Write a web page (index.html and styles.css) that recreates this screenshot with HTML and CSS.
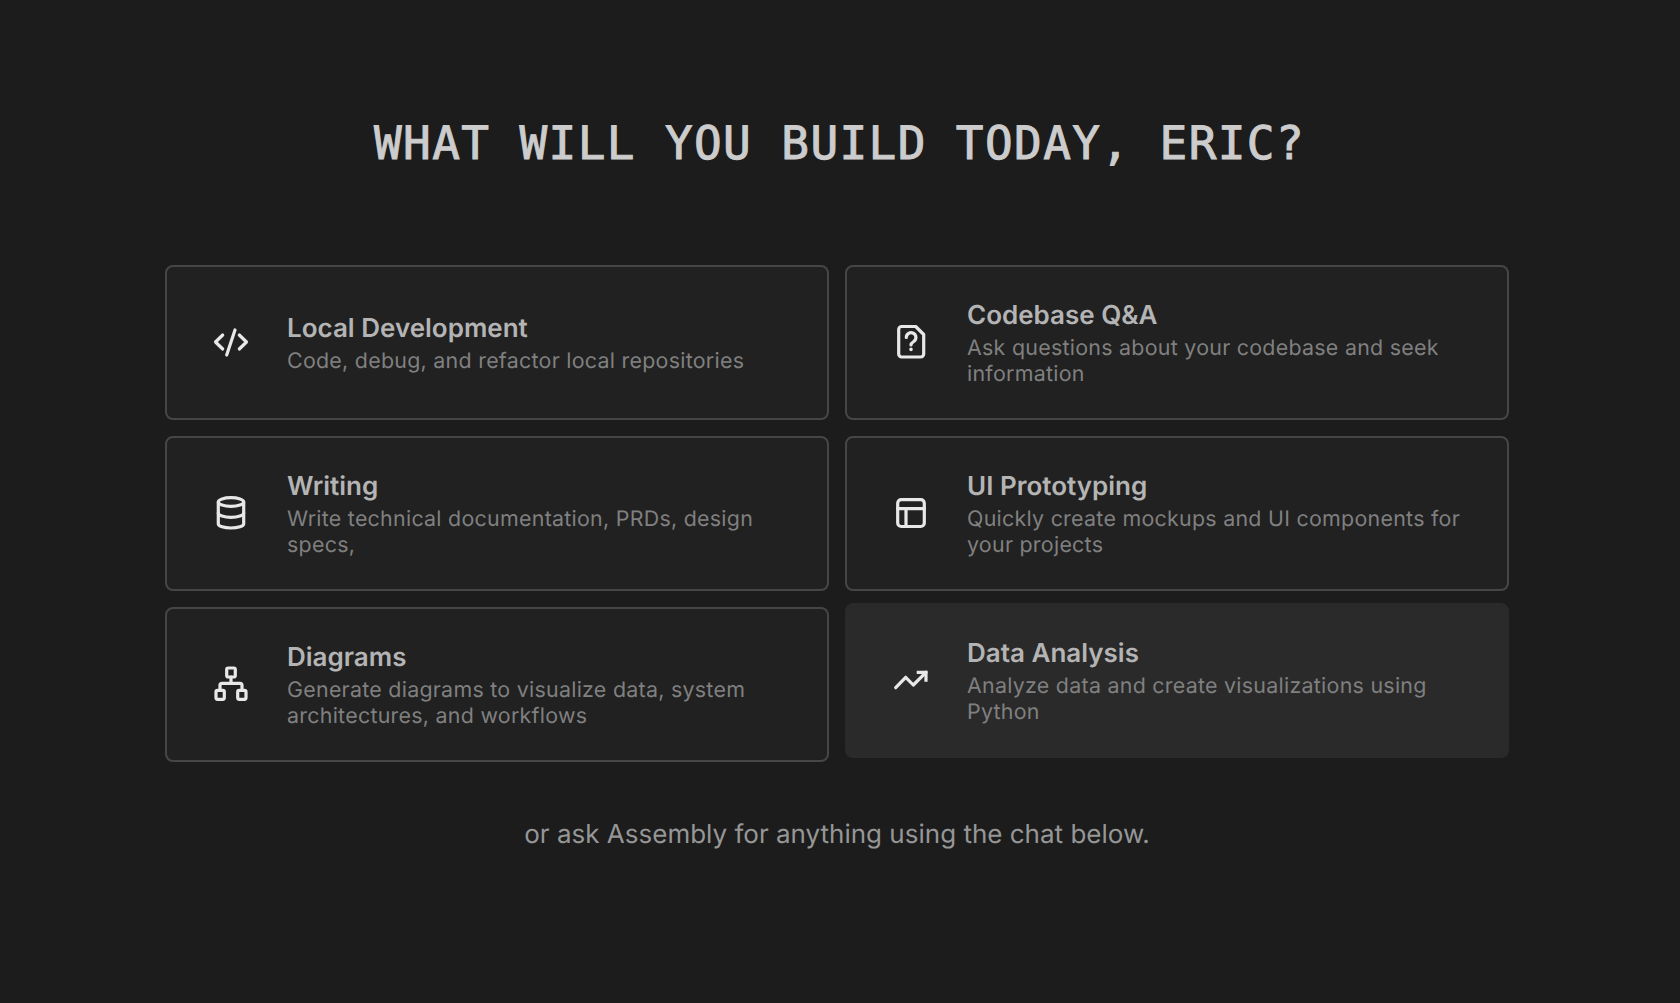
FILE: index.html
```html
<!DOCTYPE html>
<html lang="en">
<head>
    <meta charset="UTF-8">
    <meta name="viewport" content="width=device-width, initial-scale=1.0">
    <title>Assembly</title>
    <link rel="stylesheet" href="styles.css">
</head>
<body>
    <main class="welcome">
        <h1 class="welcome-title">What will you build today, Eric?</h1>

        <div class="card-grid">
            <div class="card">
                <svg class="card-icon" viewBox="0 0 40 40"><path d="M11.7 13 4.5 20l7.2 7M28.3 13l7.2 7-7.2 7M24 8l-8.3 25"/></svg>
                <div class="card-text">
                    <div class="card-title">Local Development</div>
                    <div class="card-desc">Code, debug, and refactor local repositories</div>
                </div>
            </div>
            <div class="card">
                <svg class="card-icon" viewBox="0 0 40 40"><path d="M10.7 4.5h14l8 8V32a3 3 0 0 1-3 3H10.7a3 3 0 0 1-3-3V7.500a3 3 0 0 1 3-3z"/><path d="M15.300 15.500a4.800 4.800 0 1 1 7.400 4c-1.700 1.100-2.700 1.800-2.700 3.500"/><path class="icon-dot" d="M20 27.300v.2"/></svg>
                <div class="card-text">
                    <div class="card-title">Codebase Q&amp;A</div>
                    <div class="card-desc">Ask questions about your codebase and seek information</div>
                </div>
            </div>
            <div class="card">
                <svg class="card-icon" viewBox="0 0 40 40"><ellipse cx="20" cy="9" rx="12.700" ry="4.300"/><path d="M7.300 9v22c0 2.200 5.700 4 12.700 4s12.700-1.800 12.700-4V9"/><path d="M7.300 20c0 2.400 5.700 4.300 12.700 4.300S32.700 22.400 32.700 20"/></svg>
                <div class="card-text">
                    <div class="card-title">Writing</div>
                    <div class="card-desc">Write technical documentation, PRDs, design specs,</div>
                </div>
            </div>
            <div class="card">
                <svg class="card-icon" viewBox="0 0 40 40"><rect x="6.700" y="6.700" width="26.600" height="26.800" rx="3.500"/><path d="M6.700 15.700h26.600M15 15.700v17.800"/></svg>
                <div class="card-text">
                    <div class="card-title">UI Prototyping</div>
                    <div class="card-desc">Quickly create mockups and UI components for your projects</div>
                </div>
            </div>
            <div class="card">
                <svg class="card-icon" viewBox="0 0 40 40"><rect x="15.700" y="4" width="8.600" height="9" rx="1.500"/><rect x="5" y="26.300" width="8.300" height="9" rx="1.500"/><rect x="26.700" y="26.300" width="8.300" height="9" rx="1.500"/><path d="M20 13v6.300M9 26.300v-5a2 2 0 0 1 2-2h18a2 2 0 0 1 2 2v5"/></svg>
                <div class="card-text">
                    <div class="card-title">Diagrams</div>
                    <div class="card-desc">Generate diagrams to visualize data, system architectures, and workflows</div>
                </div>
            </div>
            <div class="card card-hover">
                <svg class="card-icon" viewBox="0 0 40 40"><path d="M4.700 27.700 14.700 17.300l7.600 7.700L35 12.300"/><path class="icon-miter" d="M25.700 12.300H35v9.400"/></svg>
                <div class="card-text">
                    <div class="card-title">Data Analysis</div>
                    <div class="card-desc">Analyze data and create visualizations using Python</div>
                </div>
            </div>
        </div>

        <p class="welcome-hint">or ask Assembly for anything using the chat below.</p>
    </main>
</body>
</html>
```

FILE: styles.css
```css
* {
    box-sizing: border-box;
}

body {
    margin: 0;
    padding-right: 6px;
    background-color: #1c1c1c;
    font-family: Inter, 'Noto Sans', sans-serif;
    text-rendering: geometricPrecision;
}

.welcome {
    max-width: 1344px;
    margin: 0 auto;
    padding-top: 112px;
}

.welcome-title {
    margin: 0 0 91px;
    padding-left: 5px;
    text-align: center;
    text-transform: uppercase;
    font-family: 'DejaVu Sans Mono', monospace;
    font-size: 46px;
    font-weight: 400;
    line-height: 62px;
    letter-spacing: 1.4px;
    color: #cccccc;
    -webkit-text-stroke: 1px #cccccc;
}

.card-grid {
    display: grid;
    grid-template-columns: 1fr 1fr;
    grid-auto-rows: 155px;
    gap: 16px;
}

.card {
    display: flex;
    align-items: center;
    gap: 36px;
    padding: 0 44px;
    background-color: #212121;
    border: 2px solid #464646;
    border-radius: 8px;
}

.card-hover {
    background-color: #2a2a2a;
    border-color: #2a2a2a;
    transform: translateY(-4px);
}

.card-icon {
    flex: none;
    width: 40px;
    height: 40px;
    margin-bottom: 2px;
    fill: none;
    stroke: #e8e8e8;
    stroke-width: 3.200;
    stroke-linecap: round;
    stroke-linejoin: round;
}

.icon-dot {
    stroke-width: 3.500;
}

.icon-miter {
    stroke-linecap: butt;
    stroke-linejoin: miter;
}

.card-text {
    margin-top: 2px;
}

.card-title {
    margin-bottom: 3px;
    font-size: 26px;
    font-weight: 600;
    line-height: 32px;
    color: #b4b4b4;
}

.card-desc {
    font-size: 21.400px;
    line-height: 26px;
    letter-spacing: 0.27px;
    color: #808080;
}

.welcome-hint {
    margin: 55px 0 0;
    text-align: center;
    font-size: 26px;
    line-height: 36px;
    color: #969696;
}
```
